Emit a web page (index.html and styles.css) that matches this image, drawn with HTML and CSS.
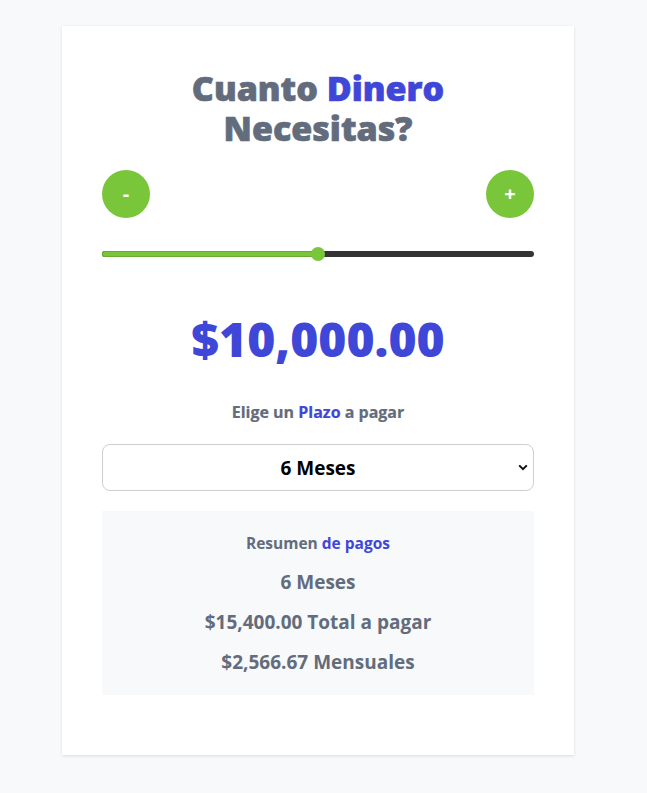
FILE: index.html
```html
<!DOCTYPE html>
<html lang="es">
<head>
<meta charset="utf-8">
<title>Cuanto Dinero Necesitas?</title>
<link rel="stylesheet" href="styles.css">
</head>
<body>
<main class="card">
  <h1 class="title">Cuanto <span class="accent">Dinero</span><br>Necesitas?</h1>
  <div class="controls">
    <button class="round-btn" type="button">-</button>
    <button class="round-btn" type="button">+</button>
  </div>
  <div class="slider">
    <div class="slider-fill" style="width: 50%"></div>
    <div class="slider-thumb" style="left: 50%"></div>
  </div>
  <p class="amount">$10,000.00</p>
  <p class="label">Elige un <span class="accent">Plazo</span> a pagar</p>
  <div class="select">
    <span class="select-text">6 Meses</span>
    <svg class="chevron" width="10" height="7" viewBox="0 0 10 7"><path d="M1.2 1.4 L5 5.2 L8.8 1.4" fill="none" stroke="#111" stroke-width="2"/></svg>
  </div>
  <section class="summary">
    <p class="summary-title">Resumen <span class="accent">de pagos</span></p>
    <p class="summary-line">6 Meses</p>
    <p class="summary-line">$15,400.00 Total a pagar</p>
    <p class="summary-line">$2,566.67 Mensuales</p>
  </section>
</main>
</body>
</html>
```

FILE: styles.css
```css
* { box-sizing: border-box; }
html, body { margin: 0; padding: 0; }
body {
  background: #f8f9fa;
  font-family: "Open Sans", "Noto Sans", sans-serif;
  padding-top: 26px;
  padding-bottom: 39px;
}
.card {
  width: 512px;
  margin: 0 0 0 62px;
  background: #fff;
  box-shadow: 0 1px 3px rgba(0,0,0,0.12);
  padding: 40px 40px 60px;
}
.accent { color: #3f47d8; }
.title {
  margin: 0;
  text-align: center;
  font-size: 34px;
  line-height: 40px;
  font-weight: 800;
  -webkit-text-stroke: 0.7px currentColor;
  color: #626c7c;
  padding-top: 2px;
}
.controls {
  display: flex;
  justify-content: space-between;
  margin-top: 22px;
}
.round-btn {
  width: 48px;
  height: 48px;
  border-radius: 50%;
  border: none;
  background: #7ac63a;
  color: #fff;
  font-family: inherit;
  font-size: 20px;
  font-weight: 700;
  padding: 0;
  line-height: 48px;
}
.slider {
  position: relative;
  height: 6px;
  margin-top: 33px;
  background: #343434;
  border-radius: 3px;
}
.slider-fill {
  height: 6px;
  background: #7ac63a;
  border-radius: 3px 0 0 3px;
  box-shadow: inset 0 0 0 1px #6aa834;
}
.slider-thumb {
  position: absolute;
  top: -4px;
  width: 14px;
  height: 14px;
  margin-left: -7px;
  border-radius: 50%;
  background: #7ac63a;
}
.amount {
  margin: 52px 0 0;
  text-align: center;
  font-size: 48px;
  line-height: 60px;
  font-weight: 800;
  color: #3f47d8;
}
.label {
  margin: 33px 0 0;
  text-align: center;
  font-size: 16px;
  line-height: 20px;
  font-weight: 700;
  -webkit-text-stroke: 0.2px currentColor;
  color: #626c7c;
}
.select {
  position: relative;
  margin-top: 22px;
  height: 47px;
  border: 1px solid #cfcfcf;
  border-radius: 8px;
  display: flex;
  align-items: center;
  justify-content: center;
}
.select-text {
  font-size: 19px;
  font-weight: 700;
  color: #000;
}
.chevron {
  position: absolute;
  right: 5px;
  top: 19px;
}
.summary {
  margin-top: 20px;
  background: #f8f9fa;
  padding: 22px 0 20px;
  text-align: center;
  color: #626c7c;
}
.summary-title {
  margin: 0;
  font-size: 15.5px;
  line-height: 20px;
  font-weight: 700;
}
.summary-line {
  margin: 14px 0 0;
  font-size: 19px;
  line-height: 26px;
  font-weight: 700;
}
.summary-title + .summary-line { margin-top: 16px; }
```
